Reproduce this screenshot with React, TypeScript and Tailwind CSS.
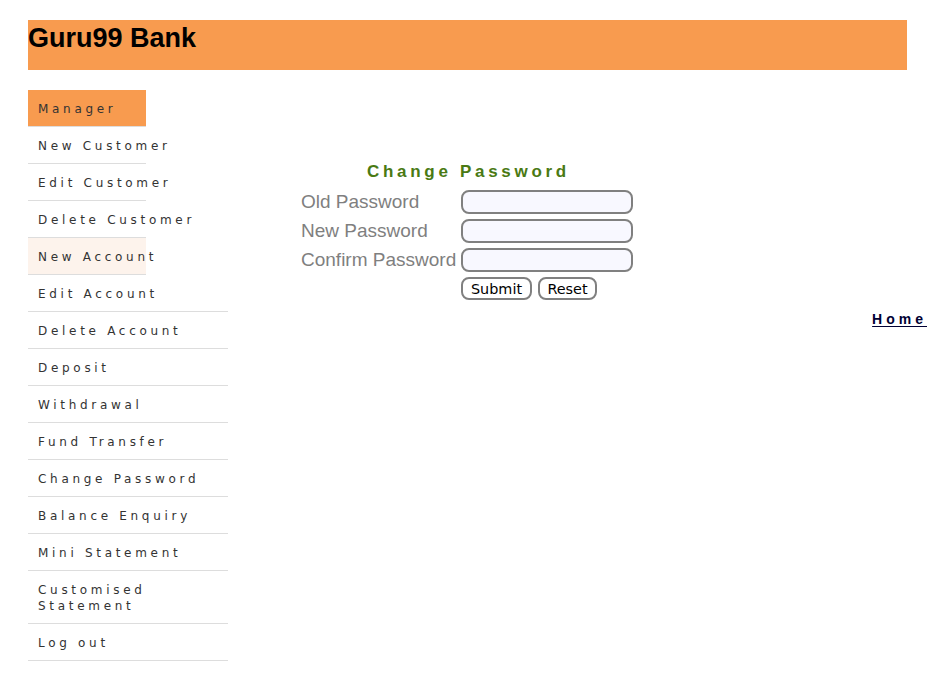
import React from "react";

const narrow = ["Manager", "New Customer", "Edit Customer", "Delete Customer", "New Account"];
const wide = [
  "Edit Account",
  "Delete Account",
  "Deposit",
  "Withdrawal",
  "Fund Transfer",
  "Change Password",
  "Balance Enquiry",
  "Mini Statement",
  "Customised Statement",
  "Log out",
];

function MenuItem({ label, w, variant }: { label: string; w: string; variant?: "active" | "hover" }) {
  const bg = variant === "active" ? "bg-[#F89B4F]" : variant === "hover" ? "bg-[#FDF3EC]" : "bg-white";
  return (
    <div
      className={`${w} ${bg} whitespace-nowrap border-b border-[#dddddd] px-[10px] pb-[9px] pt-[11px] text-[12px] leading-[16px] tracking-[3.7px] text-[#333333]`}
      style={{ fontFamily: '"DejaVu Sans", Verdana, sans-serif' }}
    >
      {label === "Customised Statement" ? (
        <>
          Customised
          <br />
          Statement
        </>
      ) : (
        label
      )}
    </div>
  );
}

export default function App() {
  return (
    <div className="min-h-[695px] bg-white px-7 pt-5" style={{ fontFamily: '"Liberation Sans", Arial, sans-serif' }}>
      <div className="h-[50px] bg-[#F89B4F]">
        <h2 className="pt-[2px] text-[27px] font-bold leading-[32px] text-black">Guru99 Bank</h2>
      </div>
      <div className="mt-5 flex">
        <div className="flex w-[200px] shrink-0 flex-col">
          {narrow.map((l, i) => (
            <MenuItem key={l} label={l} w="w-[118px]" variant={i === 0 ? "active" : i === 4 ? "hover" : undefined} />
          ))}
          {wide.map((l) => (
            <MenuItem key={l} label={l} w="w-[200px]" />
          ))}
        </div>
        <div className="flex-1 pl-[73px] pt-[72px]">
          <div className="w-[332px]">
            <div className="pl-[3px] text-center text-[17px] font-bold leading-[20px] tracking-[3.7px] text-[#4A7A14]">
              Change Password
            </div>
            <div className="mt-[8px] grid grid-cols-[160px_172px] gap-y-[5px]">
              {["Old Password", "New Password", "Confirm Password"].map((l) => (
                <React.Fragment key={l}>
                  <div className="flex h-[24px] items-center whitespace-nowrap text-[19px] text-[#7f7f7f]">{l}</div>
                  <input
                    type="password"
                    className="h-[24px] w-[172px] rounded-[8px] border-2 border-[#808080] bg-[#F8F8FF] outline-none"
                  />
                </React.Fragment>
              ))}
              <div />
              <div className="flex gap-[6px]">
                <button
                  className="h-[23px] w-[71px] rounded-[8px] border-2 border-[#808080] bg-white text-[14.4px] leading-[18px] text-black"
                  style={{ fontFamily: '"DejaVu Sans", Verdana, sans-serif' }}
                >
                  Submit
                </button>
                <button
                  className="h-[23px] w-[59px] rounded-[8px] border-2 border-[#808080] bg-white text-[14.4px] leading-[18px] text-black"
                  style={{ fontFamily: '"DejaVu Sans", Verdana, sans-serif' }}
                >
                  Reset
                </button>
              </div>
            </div>
          </div>
          <div className="-mr-5 mt-[10px] flex justify-end">
            <a href="#" className="text-[14px] font-bold leading-[18px] tracking-[4px] text-[#000033] underline underline-offset-2">
              Home
            </a>
          </div>
        </div>
      </div>
    </div>
  );
}
